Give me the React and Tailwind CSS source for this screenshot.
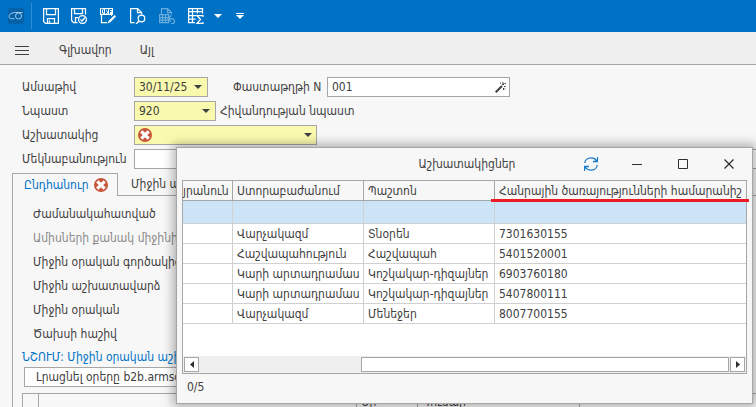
import React from "react";

const FONT = "font-['DejaVu_Sans_Condensed','DejaVu_Sans',sans-serif]";

function Caret({ className = "" }) {
  return (
    <svg width="8" height="4" viewBox="0 0 8 4" className={className} aria-hidden="true">
      <path d="M0 0h8L4 4z" fill="currentColor" />
    </svg>
  );
}

function ErrorBadge() {
  return (
    <svg width="14" height="14" viewBox="0 0 14 14" className="shrink-0" role="img" aria-label="error">
      <circle cx="7" cy="7" r="7" fill="#c8553a" />
      <path d="M3.300 3.300l7.400 7.400M10.700 3.300l-7.400 7.400" stroke="#fff" strokeWidth="3.200" />
    </svg>
  );
}

function ToolButton({ label, children, className = "" }) {
  return (
    <button type="button" aria-label={label} className={`flex h-5 items-center justify-center ${className}`}>
      {children}
    </button>
  );
}

const line = { fill: "none", stroke: "currentColor", strokeWidth: 1.25 };

function SaveIcon() {
  return (
    <svg width="16" height="16" viewBox="0 0 16 16" {...line}>
      <path d="M.6 .6h14.800v14.800H2.500L.6 13.500zM3.500 .5v6h9v-6M4.500 15.500v-5h7v5M6.500 12.500v2" />
    </svg>
  );
}

function SaveCheckIcon() {
  return (
    <svg width="17" height="16" viewBox="0 0 17 16" {...line}>
      <path d="M6.500 14.500H2.500l-1.900-2V.6h13.900v6M3.500 .5v5h8v-5M4.500 14.500v-5h3" />
      <circle cx="11.500" cy="11.500" r="3.900" />
      <path d="M9.500 11.500l1.500 1.500 3-3.500" />
    </svg>
  );
}

function DraftIcon() {
  return (
    <svg width="17" height="16" viewBox="0 0 17 16" {...line}>
      <path d="M1.500 6v8.500h6M11.500 6v2" />
      <path d="M0 0h13v7H0z" fill="currentColor" stroke="none" />
      <path d="M1.500 1v4.500h1l1-1V2l-1-1zM5.500 5.800V1.500h2v1.700h-2l2 2.500M9.500 5.800V1.500h2.500M9.500 3.500h2" stroke="#0072c6" strokeWidth="1" />
      <path d="M7 16l1-4.500 6-6 3 3-6 6z" fill="#0072c6" stroke="none" />
      <path d="M9.300 13.700l6-6" strokeWidth="2.200" />
      <path d="M7.500 15.500l1-2.500 1.500 1.500z" fill="currentColor" stroke="none" />
    </svg>
  );
}

function PreviewIcon() {
  return (
    <svg width="16" height="16" viewBox="0 0 16 16" {...line}>
      <path d="M4.500 14.500H.6V.6h7l4 4v2M7.500 .5v4h4" />
      <circle cx="11.500" cy="10.500" r="3.300" />
      <path d="M9 13l-3 3" strokeWidth="1.500" />
    </svg>
  );
}

function SheetUndoIcon() {
  return (
    <svg width="16" height="16" viewBox="0 0 16 16" {...line}>
      <path d="M2.500 6V.6h6l4 4v2M8.500 .5v4h4M.6 6.500h9v8h-9zM.5 9.500h9M.5 12h9M3.500 6.500v8M6.500 6.500v8M12 7.500l-3 3 3 3M9 10.500h4.500l2 2v2l-1.500 1h-2" />
    </svg>
  );
}

function TableSumIcon() {
  return (
    <svg width="16" height="16" viewBox="0 0 16 16" {...line}>
      <path d="M7 14.500H.6V.6h13.900v5M.5 3.500h14M.5 7.500h8M.5 11h7M4.500 .5v14M9.500 .5v5" />
      <path d="M15 9V7.500H9l3.500 4L9 15.400h6V14" />
    </svg>
  );
}

function TitleBar() {
  return (
    <header className="flex h-8 shrink-0 items-center bg-[#0072c6] pl-2 text-white">
      <svg width="16" height="16" viewBox="0 0 16 16" className="shrink-0" aria-hidden="true">
        <rect width="16" height="16" rx="2" fill="#0562a8" />
        <path d="M14.500 4.500H8C3.500 4.500 1 6.500 1 8.500s2.500 2.500 5.500 2.200" fill="none" stroke="#9cc9ea" />
        <circle cx="10.500" cy="8" r="3" fill="none" stroke="#9cc9ea" />
      </svg>
      <div className="mr-[2px] ml-[7px] h-[26px] w-px bg-[#2f8dd4]" />
      <div className="flex items-center">
        <ToolButton label="Save" className="w-[29px] pl-1"><SaveIcon /></ToolButton>
        <ToolButton label="Save and check" className="w-[29px] pl-1"><SaveCheckIcon /></ToolButton>
        <ToolButton label="Draft" className="w-[29px] pl-1"><DraftIcon /></ToolButton>
        <ToolButton label="Preview" className="w-[29px] pl-1"><PreviewIcon /></ToolButton>
        <ToolButton label="Undo" className="w-[29px] pl-1 opacity-40"><SheetUndoIcon /></ToolButton>
        <ToolButton label="Totals" className="w-[29px] pl-1"><TableSumIcon /></ToolButton>
        <ToolButton label="Totals menu" className="ml-[2px] w-4"><Caret /></ToolButton>
        <ToolButton label="More" className="ml-[2px] w-6">
          <svg width="8" height="6" viewBox="0 0 8 6" fill="currentColor"><path d="M0 0h8v1H0zM0 2h8L4 6z" /></svg>
        </ToolButton>
      </div>
    </header>
  );
}

function MenuBar() {
  return (
    <nav className="flex h-[33px] shrink-0 items-center border-b border-[#a6a6a6] bg-[#efefef] pt-1 pl-[15px]">
      <button type="button" aria-label="Menu">
        <svg width="14" height="9" viewBox="0 0 14 9" fill="#404040"><path d="M0 0h14v1H0zM0 4h14v1H0zM0 8h14v1H0z" /></svg>
      </button>
      <button type="button" className="ml-[30px]">Գլխավոր</button>
      <button type="button" className="ml-7">Այլ</button>
    </nav>
  );
}

const FIELD = "flex h-5 items-center border border-[#a6a6a6]";

function Row({ id, label, children }) {
  return (
    <div className="flex h-5 items-center">
      <label htmlFor={id} className="w-28 shrink-0 whitespace-nowrap">{label}</label>
      {children}
    </div>
  );
}

function Form() {
  return (
    <section className="flex shrink-0 flex-col gap-1 pt-3 pl-[22px]">
      <Row id="date" label="Ամսաթիվ">
        <div className={`${FIELD} w-[74px] bg-[#fafaaf] pr-[5px] pl-1`}>
          <input id="date" defaultValue="30/11/25" className="w-full min-w-0 bg-transparent outline-none" />
          <Caret className="shrink-0" />
        </div>
        <label htmlFor="doc" className="ml-[25px] w-[94px] shrink-0 whitespace-nowrap">Փաստաթղթի N</label>
        <div className={`${FIELD} w-[183px] bg-white pr-[3px] pl-1`}>
          <input id="doc" defaultValue="001" className="w-full min-w-0 bg-transparent outline-none" />
          <button type="button" aria-label="Generate">
            <svg width="11" height="11" viewBox="0 0 11 11" fill="none" stroke="#404040">
              <path d="M.7 10.300L7 4" strokeWidth="2" />
              <path d="M5 1h1M8 0v2M9.500 1.500h1.500M7 2.500h2M9 4.500h1.500M8.500 6v2M10 6.500v1" />
            </svg>
          </button>
        </div>
      </Row>
      <Row id="benefit" label="Նպաստ">
        <div className={`${FIELD} w-[82px] bg-[#fafaaf] pr-[5px] pl-1`}>
          <input id="benefit" defaultValue="920" className="w-full min-w-0 bg-transparent outline-none" />
          <Caret className="shrink-0" />
        </div>
        <span className="ml-1 whitespace-nowrap">Հիվանդության նպաստ</span>
      </Row>
      <Row id="employee" label="Աշխատակից">
        <div className={`${FIELD} w-[183px] bg-[#fafaaf] pr-1 pl-[3px]`}>
          <ErrorBadge />
          <input id="employee" className="w-full min-w-0 bg-transparent outline-none" />
          <Caret className="shrink-0" />
        </div>
      </Row>
      <Row id="note" label="Մեկնաբանություն">
        <input id="note" className="h-5 grow border border-r-0 border-[#a6a6a6] bg-white outline-none" />
      </Row>
    </section>
  );
}

const DETAILS = [
  "Ժամանակահատված",
  "Ամիսների քանակ միջինի",
  "Միջին օրական գործակից",
  "Միջին աշխատավարձ",
  "Միջին օրական",
  "Ծախսի հաշիվ",
];

function TabPanel() {
  return (
    <section className="mt-1 flex grow flex-col pl-3">
      <div className="flex h-[23px] shrink-0" role="tablist">
        <button type="button" role="tab" aria-selected="true" className="flex w-[106px] items-center gap-[5px] border border-b-0 border-[#a6a6a6] pl-[11px] text-[#0072c6]">
          Ընդհանուր <ErrorBadge />
        </button>
        <button type="button" role="tab" aria-selected="false" className="grow border-b border-[#a6a6a6] pl-[13px] text-left">
          Միջին աշխատավարձ
        </button>
      </div>
      <div className="grow border-l border-[#a6a6a6] pt-[6px] pl-[9px]">
        <ul className="pl-[11px]">
          {DETAILS.map((text, i) => (
            <li key={text} className={`flex h-6 items-center whitespace-nowrap ${i === 1 ? "text-[#8a8a8a]" : ""}`}>{text}</li>
          ))}
        </ul>
        <p className="flex h-[21px] items-center whitespace-nowrap text-[#0072c6]">ՆՇՈՒՄ: Միջին օրական աշխատավարձ</p>
        <button type="button" className="ml-[2px] flex h-5 w-60 items-center border border-[#a6a6a6] bg-white pl-[11px] whitespace-nowrap">
          Լրացնել օրերը b2b.armsoft.am
        </button>
        <div className="mt-[6px] flex h-5 overflow-hidden border-t border-l border-[#a6a6a6]">
          <div className="w-4 shrink-0 border-r border-[#a6a6a6]" />
          <div className="w-[318px] shrink-0 border-r border-[#a6a6a6]" />
          <div className="w-[61px] shrink-0 border-r border-[#a6a6a6] pl-1">Օր</div>
          <div className="w-[162px] shrink-0 border-r border-[#a6a6a6] pl-1">Գումար</div>
        </div>
      </div>
    </section>
  );
}

const ROWS = [
  ["Վարչակազմ", "Տնօրեն", "7301630155"],
  ["Հաշվապահություն", "Հաշվապահ", "5401520001"],
  ["Կարի արտադրամաս", "Կոշկակար-դիզայներ", "6903760180"],
  ["Կարի արտադրամաս", "Կոշկակար-դիզայներ", "5407800111"],
  ["Վարչակազմ", "Մենեջեր", "8007700155"],
];

const CELL = "overflow-hidden border-r border-b border-[#d0d0d0] py-0 pl-1 last:border-r-0";
const HEAD = "overflow-hidden border-r border-b border-[#a6a6a6] py-0 pl-1 text-left font-normal last:border-r-0";

function EmployeesDialog() {
  return (
    <div role="dialog" aria-labelledby="dialog-title" className="absolute top-[147px] right-[3px] left-44 flex h-[257px] flex-col border border-[#a6a6a6] bg-[#f7f7f7] px-[5px] shadow-[0_0_10px_3px_rgba(0,0,0,0.3)]">
      <div className="flex h-8 shrink-0 items-center">
        <h2 id="dialog-title" className="grow pl-[168px] text-center">Աշխատակիցներ</h2>
        <button type="button" aria-label="Refresh">
          <svg width="14" height="14" viewBox="0 0 14 14" fill="none" stroke="#1979ca">
            <path d="M.8 6C1 2.800 3.800 .8 7 .8c2.500 0 4.500 1 6 3.200M13.500 0v4.500H9M13.200 8c-.2 3.200-3 5.200-6.200 5.200-2.500 0-4.500-1-6-3.200M.5 14V9.500H5" strokeWidth="1.300" />
          </svg>
        </button>
        <button type="button" aria-label="Minimize" className="ml-[34px]">
          <svg width="10" height="10" viewBox="0 0 10 10"><path d="M0 5.500h10" stroke="#303030" /></svg>
        </button>
        <button type="button" aria-label="Maximize" className="ml-9">
          <svg width="10" height="10" viewBox="0 0 10 10"><path d="M.5 .5h9v9h-9z" fill="none" stroke="#303030" /></svg>
        </button>
        <button type="button" aria-label="Close" className="mr-[13px] ml-9">
          <svg width="10" height="10" viewBox="0 0 10 10"><path d="M.5 .5l9 9M9.500 .5l-9 9" stroke="#303030" strokeWidth="1.300" /></svg>
        </button>
      </div>
      <div className="relative flex h-[194px] flex-col border border-[#a6a6a6] bg-white">
        <table className="w-full table-fixed border-separate border-spacing-0 whitespace-nowrap">
          <colgroup>
            <col className="w-[50px]" />
            <col className="w-[131px]" />
            <col className="w-[131px]" />
            <col />
          </colgroup>
          <thead>
            <tr className="h-5 bg-[#f7f7f7]">
              <th className="border-r border-b border-[#a6a6a6] py-0 pr-1 text-right font-normal">յրանուն</th>
              <th className={HEAD}>Ստորաբաժանում</th>
              <th className={HEAD}>Պաշտոն</th>
              <th className={HEAD}>Հանրային ծառայությունների համարանիշ</th>
            </tr>
          </thead>
          <tbody>
            <tr className="h-[23px] bg-[#cce4f7]">
              <td className={CELL} /><td className={CELL} /><td className={CELL} /><td className={CELL} />
            </tr>
            {ROWS.map((row, n) => (
              <tr key={n} className="h-5">
                <td className={CELL} />
                {row.map((cell, i) => <td key={i} className={CELL}>{cell}</td>)}
              </tr>
            ))}
          </tbody>
        </table>
        <div className="absolute top-[18px] -right-[3px] left-[308px] h-[3px] bg-[#ed1c24]" />
        <div className="mt-auto flex h-[17px] items-center bg-[#efefef] px-px">
          <button type="button" aria-label="Scroll left" className="flex h-[15px] w-[15px] items-center justify-center border border-[#a6a6a6] bg-white">
            <svg width="4" height="7" viewBox="0 0 4 7"><path d="M4 0v7L0 3.500z" fill="#303030" /></svg>
          </button>
          <div className="ml-[162px] h-[15px] grow border border-[#a6a6a6] bg-white" />
          <button type="button" aria-label="Scroll right" className="ml-px flex h-[15px] w-[15px] items-center justify-center border border-[#a6a6a6] bg-white">
            <svg width="4" height="7" viewBox="0 0 4 7"><path d="M0 0v7l4-3.500z" fill="#303030" /></svg>
          </button>
        </div>
      </div>
      <div className="flex h-[26px] items-center pl-[5px]">0/5</div>
    </div>
  );
}

export default function App() {
  return (
    <main className={`relative flex h-screen flex-col overflow-hidden bg-[#f7f7f7] text-[12px] leading-4 text-[#404040] ${FONT}`}>
      <TitleBar />
      <MenuBar />
      <Form />
      <TabPanel />
      <EmployeesDialog />
    </main>
  );
}
